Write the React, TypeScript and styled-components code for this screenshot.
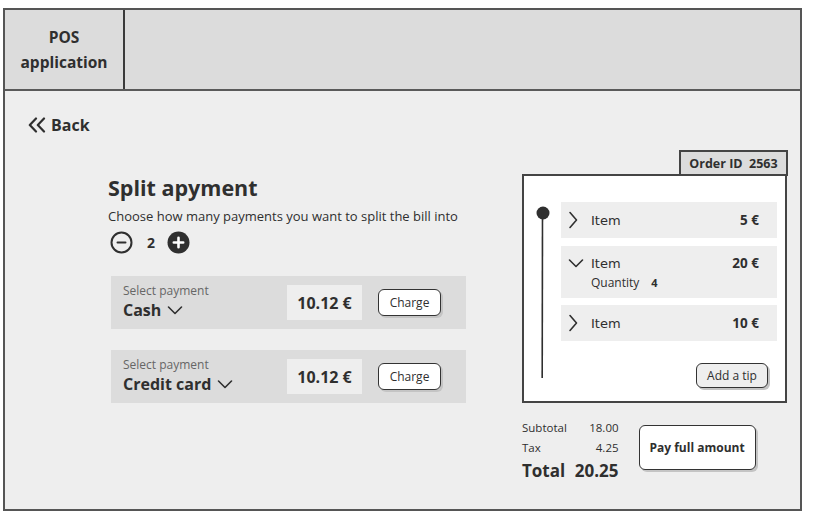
import React from "react";
import styled, { createGlobalStyle } from "styled-components";

const Global = createGlobalStyle`
  html, body { margin: 0; padding: 0; background: #ffffff; }
  body { font-family: "Open Sans", "Liberation Sans", sans-serif; color: #2f2f2f; }
  * { box-sizing: border-box; }
`;

const Frame = styled.div`
  margin: 8px 0 0 3px;
  width: 799px;
  height: 503px;
  border: 2px solid #555;
  background: #eeeeee;
  display: flex;
  flex-direction: column;
`;

const Header = styled.header`
  height: 81px;
  display: flex;
  background: #dcdcdc;
  border-bottom: 2px solid #5a5a5a;
`;

const Logo = styled.div`
  width: 120px;
  border-right: 2px solid #3a3a3a;
  display: flex;
  align-items: center;
  justify-content: center;
  text-align: center;
  font-weight: 700;
  font-size: 15.5px;
  line-height: 25px;
`;

const Body = styled.main`
  flex: 1;
  padding: 22px 0 0 23px;
  display: flex;
  flex-direction: column;
`;

const BackLink = styled.a`
  display: flex;
  align-items: center;
  gap: 5px;
  font-weight: 700;
  font-size: 16px;
  height: 24px;
  color: #2f2f2f;
  text-decoration: none;
`;

const Main = styled.div`
  display: flex;
  align-items: flex-start;
  margin-top: 13px;
`;

const LeftCol = styled.section`
  margin-left: 80px;
  width: 360px;
  padding-top: 25px;
  display: flex;
  flex-direction: column;
`;

const Title = styled.h1`
  margin: 0;
  font-size: 21.5px;
  line-height: 26px;
  font-weight: 700;
`;

const Subtitle = styled.p`
  margin: 6px 0 0;
  font-size: 13px;
  line-height: 18px;
`;

const Stepper = styled.div`
  display: flex;
  align-items: center;
  margin-top: 5px;
  padding-left: 2px;
  height: 24px;
`;

const Count = styled.span`
  font-weight: 700;
  font-size: 14px;
  margin: 0 12px 0 14px;
`;

const Cards = styled.div`
  display: flex;
  flex-direction: column;
  gap: 21px;
  margin-top: 22px;
  margin-left: 3px;
`;

const Card = styled.div`
  width: 355px;
  height: 53px;
  background: #dcdcdc;
  display: grid;
  grid-template-columns: 148px 75px 63px;
  column-gap: 16px;
  align-items: center;
  padding: 0 25px 0 12px;
`;

const SelectBox = styled.div`
  display: flex;
  flex-direction: column;
`;

const SelectLabel = styled.span`
  font-size: 12px;
  line-height: 15px;
  color: #666;
`;

const SelectValue = styled.span`
  display: flex;
  align-items: center;
  gap: 6px;
  font-weight: 700;
  font-size: 16px;
  line-height: 24px;
`;

const Amount = styled.div`
  height: 35px;
  background: #eeeeee;
  display: flex;
  align-items: center;
  justify-content: center;
  font-weight: 700;
  font-size: 16px;
`;

const Btn = styled.button<{ $bg?: string; $w?: number; $h?: number; $bold?: boolean }>`
  width: ${(p) => p.$w ?? 63}px;
  height: ${(p) => p.$h ?? 27}px;
  background: ${(p) => p.$bg ?? "#ffffff"};
  border: 1.5px solid #333;
  border-radius: 6px;
  box-shadow: 2px 2px 0 #c4c4c4;
  font-family: inherit;
  font-size: 12px;
  font-weight: ${(p) => (p.$bold ? 700 : 400)};
  color: #2f2f2f;
  padding: 0;
`;

const RightCol = styled.section`
  margin-left: 54px;
  width: 266px;
  display: flex;
  flex-direction: column;
`;

const OrderTab = styled.div`
  align-self: flex-end;
  width: 109px;
  height: 26px;
  flex: 0 0 26px;
  background: #dcdcdc;
  border: 2px solid #444;
  margin-bottom: -2px;
  display: flex;
  align-items: center;
  justify-content: center;
  font-weight: 700;
  font-size: 12.5px;
  position: relative;
  z-index: 1;
`;

const Panel = styled.div`
  width: 265px;
  height: 229px;
  background: #ffffff;
  border: 2px solid #444;
  display: grid;
  grid-template-columns: 37px 1fr;
`;

const Timeline = styled.div`
  padding-top: 30px;
  padding-left: 12px;
`;

const Items = styled.div`
  padding: 26px 8px 0 0;
  display: flex;
  flex-direction: column;
`;

const ItemRow = styled.div<{ $h: number; $mt: number }>`
  height: ${(p) => p.$h}px;
  margin-top: ${(p) => p.$mt}px;
  background: #eeeeee;
  display: flex;
  flex-direction: column;
  justify-content: center;
  padding: 0 18px 0 7px;
`;

const ItemLine = styled.div`
  display: flex;
  align-items: center;
  font-size: 14px;
  height: 22px;
`;

const ChevronSlot = styled.span`
  width: 23px;
  display: flex;
  align-items: center;
`;

const ItemName = styled.span`
  flex: 1;
  font-family: "DejaVu Sans", "Open Sans", sans-serif;
  font-size: 13px;
`;

const Price = styled.span`
  font-weight: 700;
  font-size: 13.5px;
`;

const Qty = styled.div`
  padding-left: 23px;
  font-size: 12px;
  line-height: 18px;
  display: flex;
  gap: 12px;
  b { font-weight: 700; font-size: 11px; }
`;

const TipRow = styled.div`
  display: flex;
  justify-content: flex-end;
  padding-right: 9px;
  margin-top: 22px;
`;

const Bottom = styled.div`
  display: flex;
  align-items: flex-start;
  margin-top: 15px;
  gap: 20px;
`;

const Totals = styled.div`
  display: grid;
  grid-template-columns: auto auto;
  column-gap: 8px;
  align-items: center;
  font-size: 11.5px;
  line-height: 20px;
  span:nth-child(2n) { text-align: right; }
`;

const TotalCell = styled.span`
  font-size: 17px;
  font-weight: 700;
  line-height: 26px;
`;

const PayWrap = styled.div`
  margin-top: 7px;
`;

const ChevronDown = ({ w = 16 }: { w?: number }) => (
  <svg width={w} height={10} viewBox="0 0 16 10" fill="none" stroke="#2f2f2f" strokeWidth={1.6} strokeLinecap="round" strokeLinejoin="round">
    <path d="M1.5 2 L8 8.5 L14.5 2" />
  </svg>
);

const ChevronRight = () => (
  <svg width={10} height={18} viewBox="0 0 10 18" fill="none" stroke="#2f2f2f" strokeWidth={1.6} strokeLinecap="round" strokeLinejoin="round">
    <path d="M2 1.5 L8.5 9 L2 16.5" />
  </svg>
);

const BackIcon = () => (
  <svg width={18} height={16} viewBox="0 0 18 16" fill="none" stroke="#2f2f2f" strokeWidth={2.2} strokeLinecap="round" strokeLinejoin="round">
    <path d="M8 1.5 L1.8 8 L8 14.5" />
    <path d="M16 1.5 L9.8 8 L16 14.5" />
  </svg>
);

const MinusIcon = () => (
  <svg width={23} height={23} viewBox="0 0 23 23" fill="none" stroke="#2f2f2f" strokeWidth={2}>
    <circle cx={11.5} cy={11.5} r={10} />
    <path d="M7.5 11.5 H15.5" strokeLinecap="round" />
  </svg>
);

const PlusIcon = () => (
  <svg width={23} height={23} viewBox="0 0 23 23">
    <circle cx={11.5} cy={11.5} r={11} fill="#2f2f2f" />
    <path d="M11.5 6.8 V16.2 M6.8 11.5 H16.2" stroke="#fff" strokeWidth={2.6} strokeLinecap="round" />
  </svg>
);

const TimelineIcon = () => (
  <svg width={14} height={176} viewBox="0 0 14 176">
    <circle cx={7} cy={7} r={6.5} fill="#2f2f2f" />
    <path d="M6.5 7 L6.2 172" stroke="#2f2f2f" strokeWidth={1.6} />
  </svg>
);

const payments = [
  { method: "Cash", amount: "10.12 €" },
  { method: "Credit card", amount: "10.12 €" },
];

export default function App() {
  return (
    <>
      <Global />
      <Frame>
        <Header>
          <Logo>
            POS
            <br />
            application
          </Logo>
        </Header>
        <Body>
          <BackLink>
            <BackIcon />
            Back
          </BackLink>
          <Main>
            <LeftCol>
              <Title>Split apyment</Title>
              <Subtitle>Choose how many payments you want to split the bill into</Subtitle>
              <Stepper>
                <MinusIcon />
                <Count>2</Count>
                <PlusIcon />
              </Stepper>
              <Cards>
                {payments.map((p) => (
                  <Card key={p.method}>
                    <SelectBox>
                      <SelectLabel>Select payment</SelectLabel>
                      <SelectValue>
                        {p.method}
                        <ChevronDown />
                      </SelectValue>
                    </SelectBox>
                    <Amount>{p.amount}</Amount>
                    <Btn>Charge</Btn>
                  </Card>
                ))}
              </Cards>
            </LeftCol>
            <RightCol>
              <OrderTab>Order ID&nbsp;&nbsp;2563</OrderTab>
              <Panel>
                <Timeline>
                  <TimelineIcon />
                </Timeline>
                <Items>
                  <ItemRow $h={36} $mt={0}>
                    <ItemLine>
                      <ChevronSlot><ChevronRight /></ChevronSlot>
                      <ItemName>Item</ItemName>
                      <Price>5 €</Price>
                    </ItemLine>
                  </ItemRow>
                  <ItemRow $h={52} $mt={8}>
                    <ItemLine>
                      <ChevronSlot><ChevronDown /></ChevronSlot>
                      <ItemName>Item</ItemName>
                      <Price>20 €</Price>
                    </ItemLine>
                    <Qty>
                      <span>Quantity</span>
                      <b>4</b>
                    </Qty>
                  </ItemRow>
                  <ItemRow $h={36} $mt={7}>
                    <ItemLine>
                      <ChevronSlot><ChevronRight /></ChevronSlot>
                      <ItemName>Item</ItemName>
                      <Price>10 €</Price>
                    </ItemLine>
                  </ItemRow>
                  <TipRow>
                    <Btn $bg="#eeeeee" $w={72} $h={25}>Add a tip</Btn>
                  </TipRow>
                </Items>
              </Panel>
              <Bottom>
                <Totals>
                  <span>Subtotal</span>
                  <span>18.00</span>
                  <span>Tax</span>
                  <span>4.25</span>
                  <TotalCell>Total</TotalCell>
                  <TotalCell>20.25</TotalCell>
                </Totals>
                <PayWrap>
                  <Btn $w={117} $h={45} $bold>Pay full amount</Btn>
                </PayWrap>
              </Bottom>
            </RightCol>
          </Main>
        </Body>
      </Frame>
    </>
  );
}
